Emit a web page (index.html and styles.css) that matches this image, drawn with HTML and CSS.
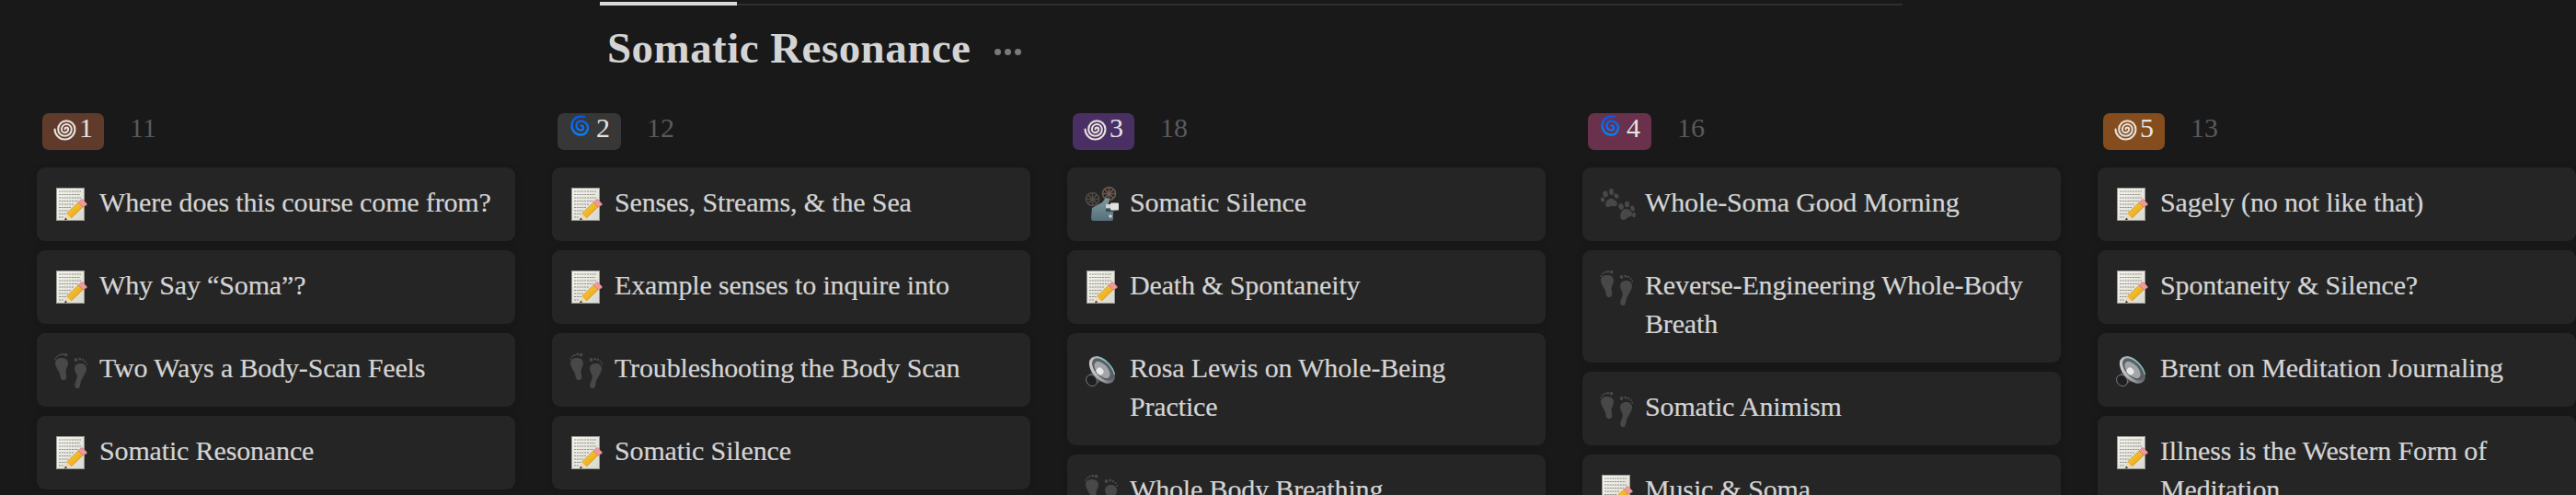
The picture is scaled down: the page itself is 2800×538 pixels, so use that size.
FILE: index.html
```html
<!DOCTYPE html>
<html lang="en">
<head>
<meta charset="utf-8">
<title>Somatic Resonance</title>
<link rel="stylesheet" href="styles.css">
</head>
<body>
<svg class="sprite" width="0" height="0" aria-hidden="true">
  <defs>
    <linearGradient id="blue" gradientUnits="userSpaceOnUse" x1="27" y1="0" x2="0" y2="0"><stop offset="0" stop-color="#0b8cf0"/><stop offset="1" stop-color="#0b52e6"/></linearGradient>
    <linearGradient id="paper" x1="0" y1="0" x2="1" y2="1"><stop offset="0" stop-color="#f6f5ef"/><stop offset="1" stop-color="#d9d8d0"/></linearGradient>
    <linearGradient id="pencil" x1="0" y1="0" x2="1" y2="1"><stop offset="0" stop-color="#fbd33c"/><stop offset="1" stop-color="#e79a12"/></linearGradient>
    <linearGradient id="cone" x1="0" y1="0" x2="1" y2="1"><stop offset="0" stop-color="#e8e8e8"/><stop offset=".55" stop-color="#8a8d90"/><stop offset="1" stop-color="#3c3d40"/></linearGradient>
    <linearGradient id="body" x1="0" y1="0" x2="0" y2="1"><stop offset="0" stop-color="#7e9aa0"/><stop offset="1" stop-color="#56707a"/></linearGradient>

    <symbol id="spiral" viewBox="-1 -1 26 26">
      <path d="M12 12A1.9 1.9 0 0 1 15.800 12A3.800 3.800 0 0 1 8.200 12A5.700 5.700 0 0 1 19.600 12A7.600 7.600 0 0 1 4.400 12A9.500 9.500 0 0 1 23.400 12A11.400 11.400 0 0 1 .6 12" fill="none" stroke="#e6dfda" stroke-width="2.200" stroke-linecap="round"/>
    </symbol>
    <symbol id="cyclone" viewBox="0 0 27 27">
      <g transform="rotate(90 13.500 13.500) translate(1.500 1.500)">
        <path d="M12 12A2.500 2.500 0 0 1 17 12A5 5 0 0 1 7 12A7.500 7.500 0 0 1 22 12A10 10 0 0 1 2 12A12 12 0 0 1 2.300 8.500" fill="none" stroke="url(#blue)" stroke-width="2.400" stroke-linecap="round"/>
      </g>
    </symbol>

    <symbol id="memo" viewBox="0 0 40 40">
      <rect x="3.500" y="2.500" width="30" height="35" fill="url(#paper)" stroke="#9a9a94"/>
      <g fill="none" stroke="#77766f" stroke-width=".8" stroke-dasharray="2 .8">
        <path d="M6 6h24M6 9.500h23M6 13h24M6 16.500h21M6 20h16M6 23.500h13M6 27h10M6 30.500h8M6 34h5"/>
      </g>
      <path d="M27 18L32 23 19.500 35 14.500 30z" fill="url(#pencil)" stroke="#b37a10" stroke-width=".5"/>
      <path d="M14.500 30l5 5-7.500 2.500z" fill="#f2d6ad"/>
      <path d="M12 37.500l1-3 2.200 2z" fill="#3a3a3a"/>
      <path d="M27 18l3-3q1-1 2 0l4 4q1 1 0 2l-4 2z" fill="#ee9a9a" stroke="#c76d6d" stroke-width=".5"/>
    </symbol>

    <symbol id="feet" viewBox="0 0 40 40">
      <g fill="#484848">
        <path d="M2 12.500c0-3.500 3-5.500 7-5.500s7 2 7 6c0 3-2 5-2.500 8-.3 2 1 4.500.8 7-.2 2.500-2.300 3.500-4.300 3-2-.5-2.400-3-2.700-5.500C6.800 22 2 17 2 12.500z"/>
        <circle cx="13.500" cy="3.600" r="1.900"/><circle cx="9.700" cy="3.200" r="1.400"/><circle cx="6.500" cy="3.900" r="1.200"/><circle cx="4" cy="5.500" r="1.100"/><circle cx="2.300" cy="8" r="1"/>
        <path d="M36 18.500c0-3.500-3-5.500-6.500-5.500s-6.500 2-6.500 6c0 3 2.500 5 2.800 8 .3 3-2.300 6-2.500 9-.2 2.500 1 4.500 2.700 4.500 2.500 0 3-3 3.600-6.500 1-5.500 6.400-10 6.400-15.500z"/>
        <circle cx="24.500" cy="9" r="1.900"/><circle cx="28.800" cy="8.200" r="1.400"/><circle cx="32" cy="9" r="1.200"/><circle cx="34.600" cy="11" r="1.100"/><circle cx="36.300" cy="13.700" r="1"/>
      </g>
    </symbol>

    <symbol id="paw" viewBox="0 0 40 40">
      <g fill="#484848">
        <path d="M8 17c2-3.500 6-4 8.500-2 2.500 1.800 4.500 3.500 3 6-1.300 2-3.300.8-5.500 1-2 .2-4 2-6 .5C6.500 21.500 7 18.700 8 17z"/>
        <ellipse cx="7" cy="9" rx="2.700" ry="3.500" transform="rotate(-10 7 9)"/>
        <ellipse cx="13.500" cy="6.600" rx="2.500" ry="3.500" transform="rotate(-5 13.500 6.600)"/>
        <ellipse cx="19" cy="11" rx="2.300" ry="2.800" transform="rotate(-30 19 11)"/>
        <ellipse cx="4" cy="15" rx="2.100" ry="2.700" transform="rotate(-15 4 15)"/>
        <path d="M24 29c1.500-4 6-5 9-3 2.500 1.700 4 4.500 2.500 6.500-1 1.500-2.800.5-4.500 2-1.500 1.300-3 3-5 2.500-3-.8-3.300-4.500-2-8z"/>
        <ellipse cx="24" cy="22.500" rx="2.700" ry="3.400" transform="rotate(-15 24 22.500)"/>
        <ellipse cx="30.500" cy="20" rx="2.500" ry="3.300"/>
        <ellipse cx="36.500" cy="24.500" rx="2.200" ry="3" transform="rotate(-15 36.500 24.500)"/>
        <ellipse cx="38" cy="31.500" rx="1.900" ry="2.700"/>
      </g>
    </symbol>

    <symbol id="speaker" viewBox="0 0 40 40">
      <path d="M12 15L4 30q-1 4 3 6 4 2 7-1l12-7z" fill="#4a4b4e"/>
      <ellipse cx="8.500" cy="31.500" rx="5.500" ry="6.500" transform="rotate(-40 8.500 31.500)" fill="#1f1f21" stroke="#85878a" stroke-width=".8"/>
      <ellipse cx="20" cy="20" rx="10.500" ry="17.500" transform="rotate(-42 20 20)" fill="url(#cone)"/>
      <ellipse cx="20.500" cy="19.500" rx="8" ry="14.500" transform="rotate(-42 20.500 19.500)" fill="#5b5e62"/>
      <ellipse cx="20" cy="20" rx="6" ry="11" transform="rotate(-42 20 20)" fill="#a3a6a9"/>
      <ellipse cx="17.500" cy="21.500" rx="3.600" ry="4.200" transform="rotate(-42 17.500 21.500)" fill="#e8e8e8"/>
      <path d="M13 6C21 6 31 15 33.500 25" fill="none" stroke="#7fc6c4" stroke-width="1.300"/>
    </symbol>

    <symbol id="projector" viewBox="0 0 40 40">
      <g fill="none" stroke="#6e5a4c" stroke-width="1.600">
        <circle cx="27.500" cy="8.500" r="7"/><path d="M27.500 1.500v14M20.500 8.500h14M22.500 3.500l10 10M32.500 3.500l-10 10"/>
      </g>
      <g fill="none" stroke="#4f4a46" stroke-width="1.600">
        <circle cx="9.500" cy="14.500" r="7"/><path d="M9.500 7.500v14M2.500 14.500h14M4.500 9.500l10 10M14.500 9.500l-10 10"/>
      </g>
      <path d="M9 24l11-6 4-5 4 1-1 6 5 1v15q0 2-2 2H11q-3 0-3-3z" fill="url(#body)"/>
      <rect x="24" y="20" width="10" height="4" fill="#cfd4d4"/>
      <rect x="24" y="25" width="10" height="3" fill="#3d4a4f"/>
      <rect x="29" y="18.500" width="9" height="8" rx="1" fill="#dfe2e0"/>
      <circle cx="29" cy="33" r="1.800" fill="#c9d1d1"/>
    </symbol>
  </defs>
</svg>

<header class="header">
  <div class="tabs"><span class="tab-active"></span><span class="tab-rest"></span></div>
  <div class="title-row">
    <h1 class="title">Somatic Resonance</h1>
    <div class="dots"><i></i><i></i><i></i></div>
  </div>
</header>

<main class="board">
  <section class="column">
    <div class="column-head">
      <span class="badge brown"><svg class="spiral"><use href="#spiral"/></svg>1</span>
      <span class="count">11</span>
    </div>
    <article class="card"><svg class="icon"><use href="#memo"/></svg><span class="label">Where does this course come from?</span></article>
    <article class="card"><svg class="icon"><use href="#memo"/></svg><span class="label">Why Say “Soma”?</span></article>
    <article class="card"><svg class="icon"><use href="#feet"/></svg><span class="label">Two Ways a Body-Scan Feels</span></article>
    <article class="card"><svg class="icon"><use href="#memo"/></svg><span class="label">Somatic Resonance</span></article>
  </section>

  <section class="column">
    <div class="column-head">
      <span class="badge gray"><svg class="cyclone"><use href="#cyclone"/></svg>2</span>
      <span class="count">12</span>
    </div>
    <article class="card"><svg class="icon"><use href="#memo"/></svg><span class="label">Senses, Streams, &amp; the Sea</span></article>
    <article class="card"><svg class="icon"><use href="#memo"/></svg><span class="label">Example senses to inquire into</span></article>
    <article class="card"><svg class="icon"><use href="#feet"/></svg><span class="label">Troubleshooting the Body Scan</span></article>
    <article class="card"><svg class="icon"><use href="#memo"/></svg><span class="label">Somatic Silence</span></article>
  </section>

  <section class="column">
    <div class="column-head">
      <span class="badge purple"><svg class="spiral"><use href="#spiral"/></svg>3</span>
      <span class="count">18</span>
    </div>
    <article class="card"><svg class="icon"><use href="#projector"/></svg><span class="label">Somatic Silence</span></article>
    <article class="card"><svg class="icon"><use href="#memo"/></svg><span class="label">Death &amp; Spontaneity</span></article>
    <article class="card"><svg class="icon"><use href="#speaker"/></svg><span class="label">Rosa Lewis on Whole-Being Practice</span></article>
    <article class="card"><svg class="icon"><use href="#feet"/></svg><span class="label">Whole Body Breathing</span></article>
  </section>

  <section class="column">
    <div class="column-head">
      <span class="badge pink"><svg class="cyclone"><use href="#cyclone"/></svg>4</span>
      <span class="count">16</span>
    </div>
    <article class="card"><svg class="icon"><use href="#paw"/></svg><span class="label">Whole-Soma Good Morning</span></article>
    <article class="card"><svg class="icon"><use href="#feet"/></svg><span class="label">Reverse-Engineering Whole-Body Breath</span></article>
    <article class="card"><svg class="icon"><use href="#feet"/></svg><span class="label">Somatic Animism</span></article>
    <article class="card"><svg class="icon"><use href="#memo"/></svg><span class="label">Music &amp; Soma</span></article>
  </section>

  <section class="column">
    <div class="column-head">
      <span class="badge orange"><svg class="spiral"><use href="#spiral"/></svg>5</span>
      <span class="count">13</span>
    </div>
    <article class="card"><svg class="icon"><use href="#memo"/></svg><span class="label">Sagely (no not like that)</span></article>
    <article class="card"><svg class="icon"><use href="#memo"/></svg><span class="label">Spontaneity &amp; Silence?</span></article>
    <article class="card"><svg class="icon"><use href="#speaker"/></svg><span class="label">Brent on Meditation Journaling</span></article>
    <article class="card"><svg class="icon"><use href="#memo"/></svg><span class="label">Illness is the Western Form of Meditation</span></article>
  </section>
</main>
</body>
</html>
```

FILE: styles.css
```css
html, body {
  margin: 0;
  height: 538px;
  overflow: hidden;
  background: #191919;
}

body {
  font-family: "Liberation Serif", "Times New Roman", serif;
  color: #d4d4d4;
}

.sprite {
  display: block;
  width: 0;
  height: 0;
}

.header {
  width: 1416px;
  margin-left: 652px;
}

.tabs {
  display: flex;
  height: 4px;
  padding-top: 2px;
}

.tab-active {
  width: 149px;
  background: #d9d9d9;
}

.tab-rest {
  flex: 1;
  height: 2px;
  margin-top: 2px;
  background: #2f2f2f;
}

.title-row {
  display: flex;
  align-items: center;
  gap: 26px;
  height: 60px;
  padding: 16px 0 24px 8px;
}

.title {
  margin: 0;
  font-size: 47px;
  line-height: 60px;
  font-weight: 700;
  letter-spacing: 0.45px;
  color: #d4d4d4;
}

.dots {
  display: flex;
  gap: 4px;
  margin-top: 8px;
}

.dots i {
  display: block;
  width: 7px;
  height: 7px;
  border-radius: 50%;
  background: #7a7a7a;
}

.board {
  display: flex;
  gap: 40px;
  padding-left: 40px;
  padding-top: 17px;
}

.column {
  flex: none;
  width: 520px;
  display: flex;
  flex-direction: column;
  gap: 10px;
}

.column-head {
  display: flex;
  gap: 28px;
  padding-left: 6px;
  margin-bottom: 9px;
  font-size: 30px;
  line-height: 32px;
}

.badge {
  display: flex;
  align-items: flex-start;
  gap: 3px;
  height: 32px;
  padding: 0 12px 8px;
  border-radius: 7px;
  color: #e6e3e0;
}

.brown { background: #603b2c; }
.gray { background: #373737; }
.purple { background: #492f64; }
.pink { background: #69314c; }
.orange { background: #854c1d; }

.spiral {
  width: 25px;
  height: 25px;
  margin-top: 5px;
}

.cyclone {
  width: 27px;
  height: 27px;
}

.count {
  color: #5a5a5a;
}

.card {
  display: flex;
  gap: 10px;
  min-height: 42px;
  padding: 17px 20px 21px 18px;
  border-radius: 9px;
  background: #252525;
  box-shadow: 0 0 6px rgba(15, 15, 15, 0.25);
}

.icon {
  flex: none;
  width: 40px;
  height: 40px;
  margin: 3px 0 -1px;
}

.label {
  font-size: 30px;
  line-height: 42px;
  letter-spacing: -0.15px;
  color: #d4d4d4;
  -webkit-text-stroke: 0.2px #d4d4d4;
}
```
